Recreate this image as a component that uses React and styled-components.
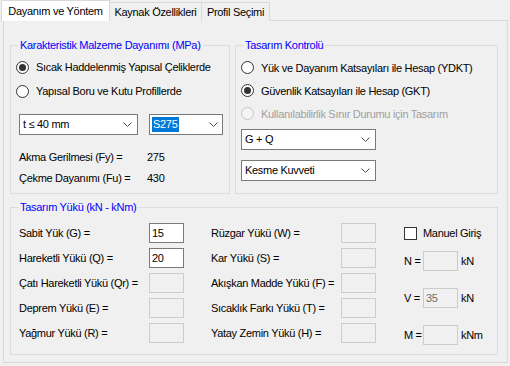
import React from "react";
import styled, { createGlobalStyle } from "styled-components";

const GlobalStyle = createGlobalStyle`
  html, body {
    margin: 0;
    padding: 0;
    background: #f0f0f0;
  }
  body {
    font-family: "Liberation Sans", Arial, sans-serif;
    font-size: 11px;
    letter-spacing: -0.3px;
    color: #000;
  }
  * {
    box-sizing: border-box;
  }
`;

const Window = styled.div`
  width: 510px;
  height: 366px;
  padding: 0 2px 0 3px;
  display: flex;
  flex-direction: column;
`;

const TabStrip = styled.div`
  display: flex;
  align-items: flex-end;
  height: 21px;
  margin-left: -2px;
  position: relative;
  z-index: 1;
`;

const Tab = styled.div`
  width: ${(p) => p.$w}px;
  height: ${(p) => (p.$active ? 21 : 19)}px;
  display: flex;
  align-items: center;
  justify-content: center;
  background: ${(p) => (p.$active ? "#fff" : "#f0f0f0")};
  border: 1px solid #d9d9d9;
  border-bottom: none;
  border-left: ${(p) => (p.$first ? "1px solid #d9d9d9" : "none")};
  padding-bottom: ${(p) => (p.$active ? 1 : 0)}px;
  white-space: nowrap;
`;

const Panel = styled.div`
  margin-top: -1px;
  height: 343px;
  border: 1px solid #d9d9d9;
  background: #f0f0f0;
  padding: 17px 9px 0 6px;
  display: flex;
  flex-direction: column;
`;

const TopRow = styled.div`
  display: flex;
  gap: 5px;
`;

const Group = styled.fieldset`
  margin: 0;
  padding: 0;
  min-width: 0;
  width: ${(p) => p.$w}px;
  height: ${(p) => p.$h}px;
  margin-top: ${(p) => p.$mt || 0}px;
  border: 1px solid #dcdcdc;
`;

const Legend = styled.legend`
  margin-left: 7px;
  padding: 0 2px;
  color: #0000ff;
  line-height: 14px;
  white-space: nowrap;
`;

const GroupBody = styled.div`
  display: flex;
  flex-direction: column;
  padding: ${(p) => p.$pad};
`;

const RadioRow = styled.div`
  display: flex;
  align-items: center;
  gap: 7px;
  height: ${(p) => p.$h}px;
  color: ${(p) => (p.$disabled ? "#a0a0a0" : "#000")};
  white-space: nowrap;
`;

const RadioCircle = styled.span`
  width: 13px;
  height: 13px;
  flex: none;
  border-radius: 50%;
  border: 1px solid ${(p) => (p.$disabled ? "#c4c4c4" : "#333")};
  background: ${(p) => (p.$disabled ? "#f4f4f4" : "#fff")};
  display: flex;
  align-items: center;
  justify-content: center;

  &::after {
    content: "";
    display: ${(p) => (p.$checked ? "block" : "none")};
    width: 7px;
    height: 7px;
    border-radius: 50%;
    background: #333;
  }
`;

const ComboRow = styled.div`
  display: flex;
  gap: ${(p) => p.$gap || 0}px;
  margin-top: ${(p) => p.$mt || 0}px;
`;

const Combo = styled.div`
  width: ${(p) => p.$w}px;
  height: 21px;
  border: 1px solid #7a7a7a;
  background: #fff;
  display: flex;
  align-items: center;
  justify-content: space-between;
  padding: 0 ${(p) => p.$pr || 5}px 0 2px;
  white-space: nowrap;
`;

const ComboText = styled.span`
  line-height: 15px;
  padding: 0 1px;
  background: ${(p) => (p.$selected ? "#0078d7" : "transparent")};
  color: ${(p) => (p.$selected ? "#fff" : "#000")};
`;

const Chevron = () => (
  <svg width="9" height="5" viewBox="0 0 9 5">
    <polyline
      points="0.5,0.5 4.5,4.5 8.5,0.5"
      fill="none"
      stroke="#4a4a4a"
      strokeWidth="1"
    />
  </svg>
);

const InfoRow = styled.div`
  display: flex;
  align-items: center;
  height: 21px;
  margin-top: ${(p) => p.$mt || 0}px;
`;

const InfoLabel = styled.span`
  width: 128px;
  white-space: nowrap;
`;

const LoadsBody = styled.div`
  display: flex;
  padding: 9px 0 0 8px;
`;

const LoadColumn = styled.div`
  display: flex;
  flex-direction: column;
  gap: 5px;
  margin-left: ${(p) => p.$ml || 0}px;
`;

const LoadRow = styled.div`
  display: flex;
  align-items: center;
  height: 20px;
`;

const LoadLabel = styled.span`
  width: ${(p) => p.$w || 130}px;
  flex: none;
  white-space: nowrap;
`;

const Field = styled.div`
  width: 35px;
  height: 20px;
  flex: none;
  border: 1px solid ${(p) => (p.$disabled ? "#cccccc" : "#7a7a7a")};
  background: ${(p) => (p.$disabled ? "#f0f0f0" : "#fff")};
  color: ${(p) => (p.$disabled ? "#6d6d6d" : "#000")};
  padding-left: 2px;
  line-height: 18px;
`;

const SideColumn = styled.div`
  display: flex;
  flex-direction: column;
  margin-left: 28px;
`;

const CheckRow = styled.label`
  display: flex;
  align-items: center;
  gap: 6px;
  height: 20px;
`;

const CheckBox = styled.span`
  width: 13px;
  height: 13px;
  border: 1px solid #333;
  background: #fff;
`;

const UnitRow = styled.div`
  display: flex;
  align-items: center;
  height: 20px;
  margin-top: ${(p) => p.$mt}px;
`;

const Unit = styled.span`
  margin-left: 3px;
`;

const leftLoads = [
  ["Sabit Yük (G) =", "15"],
  ["Hareketli Yükü (Q) =", "20"],
  ["Çatı Hareketli Yükü (Qr) =", null],
  ["Deprem Yükü (E) =", null],
  ["Yağmur Yükü (R) =", null],
];

const midLoads = [
  "Rüzgar Yükü (W) =",
  "Kar Yükü (S) =",
  "Akışkan Madde Yükü (F) =",
  "Sıcaklık Farkı Yükü (T) =",
  "Yatay Zemin Yükü (H) =",
];

export default function App() {
  return (
    <>
      <GlobalStyle />
      <Window>
        <TabStrip>
          <Tab $active $first $w={109}>Dayanım ve Yöntem</Tab>
          <Tab $w={92}>Kaynak Özellikleri</Tab>
          <Tab $w={68}>Profil Seçimi</Tab>
        </TabStrip>
        <Panel>
          <TopRow>
            <Group $w={220} $h={156}>
              <Legend>Karakteristik Malzeme Dayanımı (MPa)</Legend>
              <GroupBody $pad="3px 0 0 5px">
                <RadioRow $h={24}>
                  <RadioCircle $checked />
                  Sıcak Haddelenmiş Yapısal Çeliklerde
                </RadioRow>
                <RadioRow $h={24}>
                  <RadioCircle />
                  Yapısal Boru ve Kutu Profillerde
                </RadioRow>
              </GroupBody>
              <GroupBody $pad="0 0 0 8px">
                <ComboRow $mt={11} $gap={11}>
                  <Combo $w={119}>
                    <ComboText>t ≤ 40 mm</ComboText>
                    <Chevron />
                  </Combo>
                  <Combo $w={74} $pr={4}>
                    <ComboText $selected>S275</ComboText>
                    <Chevron />
                  </Combo>
                </ComboRow>
                <InfoRow $mt={11}>
                  <InfoLabel>Akma Gerilmesi (Fy) =</InfoLabel>
                  275
                </InfoRow>
                <InfoRow>
                  <InfoLabel>Çekme Dayanımı (Fu) =</InfoLabel>
                  430
                </InfoRow>
              </GroupBody>
            </Group>
            <Group $w={263} $h={156}>
              <Legend>Tasarım Kontrolü</Legend>
              <GroupBody $pad="4px 0 0 5px">
                <RadioRow $h={23}>
                  <RadioCircle />
                  Yük ve Dayanım Katsayıları ile Hesap (YDKT)
                </RadioRow>
                <RadioRow $h={23}>
                  <RadioCircle $checked />
                  Güvenlik Katsayıları ile Hesap (GKT)
                </RadioRow>
                <RadioRow $h={23} $disabled>
                  <RadioCircle $disabled />
                  Kullanılabilirlik Sınır Durumu için Tasarım
                </RadioRow>
                <ComboRow $mt={4}>
                  <Combo $w={135}>
                    <ComboText>G + Q</ComboText>
                    <Chevron />
                  </Combo>
                </ComboRow>
                <ComboRow $mt={10}>
                  <Combo $w={135}>
                    <ComboText>Kesme Kuvveti</ComboText>
                    <Chevron />
                  </Combo>
                </ComboRow>
              </GroupBody>
            </Group>
          </TopRow>
          <Group $w={488} $h={155} $mt={6}>
            <Legend>Tasarım Yükü (kN - kNm)</Legend>
            <LoadsBody>
              <LoadColumn>
                {leftLoads.map(([label, value]) => (
                  <LoadRow key={label}>
                    <LoadLabel>{label}</LoadLabel>
                    <Field $disabled={value === null}>{value}</Field>
                  </LoadRow>
                ))}
              </LoadColumn>
              <LoadColumn $ml={27}>
                {midLoads.map((label) => (
                  <LoadRow key={label}>
                    <LoadLabel>{label}</LoadLabel>
                    <Field $disabled />
                  </LoadRow>
                ))}
              </LoadColumn>
              <SideColumn>
                <CheckRow>
                  <CheckBox />
                  Manuel Giriş
                </CheckRow>
                <UnitRow $mt={8}>
                  <LoadLabel $w={19}>N =</LoadLabel>
                  <Field $disabled />
                  <Unit>kN</Unit>
                </UnitRow>
                <UnitRow $mt={17}>
                  <LoadLabel $w={19}>V =</LoadLabel>
                  <Field $disabled>35</Field>
                  <Unit>kN</Unit>
                </UnitRow>
                <UnitRow $mt={17}>
                  <LoadLabel $w={19}>M =</LoadLabel>
                  <Field $disabled />
                  <Unit>kNm</Unit>
                </UnitRow>
              </SideColumn>
            </LoadsBody>
          </Group>
        </Panel>
      </Window>
    </>
  );
}
